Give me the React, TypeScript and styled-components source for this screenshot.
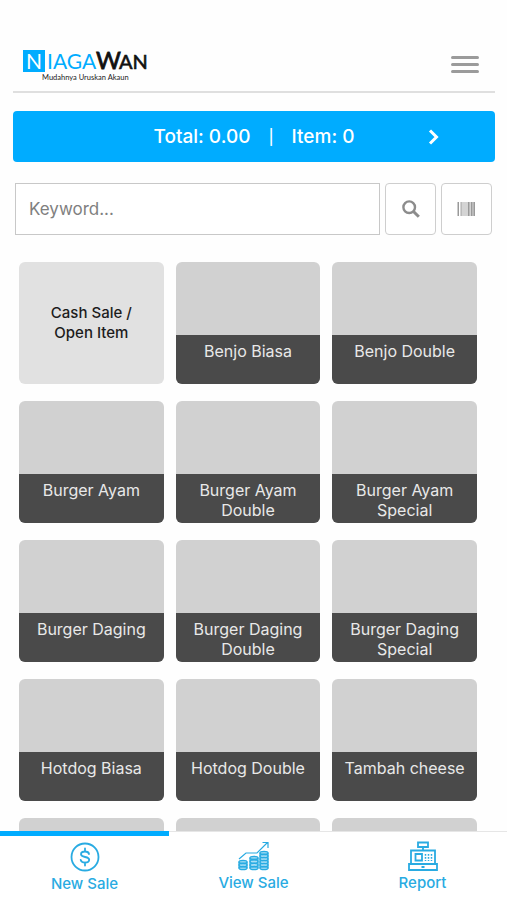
import React from "react";
import styled, { createGlobalStyle } from "styled-components";

const BLUE = "#00acff";
const NAV_BLUE = "#29abe2";

const GlobalStyle = createGlobalStyle`
  *, *::before, *::after { box-sizing: border-box; }
  body {
    margin: 0;
    background: #fefefe;
    font-family: Inter, "Liberation Sans", sans-serif;
  }
  button, input { font: inherit; }
`;

const Page = styled.div`
  display: flex;
  flex-direction: column;
  height: 100vh;
  overflow: hidden;
`;

const Header = styled.header`
  display: flex;
  align-items: center;
  justify-content: space-between;
  margin: 38px 12px 0 13px;
  padding: 0 16px 0 10px;
  height: 55px;
  flex: none;
  border-bottom: 2px solid #dfdfdf;
`;

const HomeLink = styled.a`
  display: flex;
`;

const MenuButton = styled.button`
  display: flex;
  flex-direction: column;
  gap: 4px;
  padding: 0;
  border: 0;
  background: none;
  cursor: pointer;
`;

const MenuBar = styled.span`
  width: 28px;
  height: 3px;
  border-radius: 2px;
  background: #9b9b9b;
`;

const TotalBar = styled.button`
  display: grid;
  grid-template-columns: 1fr auto 1fr;
  align-items: center;
  flex: none;
  height: 51px;
  margin: 18px 12px 0 13px;
  padding: 0;
  border: 0;
  border-radius: 4px;
  background: ${BLUE};
  color: #fff;
  font-size: 19px;
  font-weight: 500;
  cursor: pointer;
`;

const Totals = styled.span`
  display: flex;
  align-items: center;
  grid-column: 2;
  gap: 18px;
`;

const Divider = styled.span`
  font-size: 15px;
`;

const ChevronSlot = styled.span`
  display: flex;
  justify-content: flex-end;
  padding-right: 55px;
`;

const SearchRow = styled.form`
  display: flex;
  flex: none;
  gap: 5px;
  height: 52px;
  margin: 21px 15px 0;
`;

const SearchInput = styled.input`
  flex: 1;
  min-width: 0;
  padding: 0 13px;
  border: 1px solid #c8c8c8;
  background: #fff;
  color: #444;
  font-size: 17px;
  outline: none;

  &::placeholder { color: #808080; opacity: 1; }
  &:focus { border-color: ${BLUE}; }
`;

const IconButton = styled.button`
  display: flex;
  align-items: center;
  justify-content: center;
  width: 51px;
  padding: 0;
  border: 1px solid #cecece;
  border-radius: 4px;
  background: #fff;
  cursor: pointer;
`;

const Catalogue = styled.main`
  display: grid;
  grid-template-columns: repeat(3, 1fr);
  grid-auto-rows: 122px;
  gap: 17px 12px;
  flex: 1;
  min-height: 0;
  margin-top: 27px;
  padding: 0 30px 0 19px;
  overflow-y: auto;
  scrollbar-width: none;
`;

const Tile = styled.button<{ $open?: boolean }>`
  display: flex;
  flex-direction: column;
  justify-content: ${(p) => (p.$open ? "center" : "flex-end")};
  align-items: stretch;
  padding: 0;
  overflow: hidden;
  border: 0;
  border-radius: 6px;
  background: ${(p) => (p.$open ? "#e1e1e1" : "#d1d1d1")};
  color: ${(p) => (p.$open ? "#1c1c1c" : "#e8e8e8")};
  font-size: ${(p) => (p.$open ? "15px" : "16px")};
  font-weight: ${(p) => (p.$open ? 500 : 400)};
  line-height: 20px;
  cursor: pointer;
`;

const OpenLabel = styled.span`
  padding: 0 24px;
`;

const TileLabel = styled.span`
  height: 49px;
  padding: 6px 8px 0;
  background: #4a4a4a;
`;

const Nav = styled.nav`
  display: grid;
  grid-template-columns: repeat(3, 1fr);
  flex: none;
  height: 69px;
  background: #fff;
`;

const Tab = styled.a<{ $active?: boolean }>`
  display: flex;
  flex-direction: column;
  align-items: center;
  gap: 2px;
  padding-top: ${(p) => (p.$active ? "6px" : "9px")};
  border-top: ${(p) => (p.$active ? `5px solid ${BLUE}` : "1px solid #e6e6e6")};
  color: ${NAV_BLUE};
  font-size: 15px;
  font-weight: 500;
  line-height: 20px;
  text-decoration: none;
`;

const Logo = () => (
  <svg width="128" height="38" viewBox="0 0 128 38" role="img" aria-label="NiagaWan, Mudahnya Uruskan Akaun">
    <rect x="0" y="4" width="22" height="22" fill={BLUE} />
    <g fontFamily="Lato, sans-serif" fontSize="21">
      <text x="3" y="23" fill="#fff">N</text>
      <text x="24" y="23" fill={BLUE}>IAGA</text>
      <text x="73" y="23" fontSize="24" fill="#111" stroke="#111" strokeWidth="0.8">W</text>
      <text x="96" y="23" fontSize="20" fill="#111" stroke="#111" strokeWidth="0.6">AN</text>
    </g>
    <text x="19" y="34" fontFamily="Lato, sans-serif" fontSize="7.500" fill="#222">Mudahnya Uruskan Akaun</text>
  </svg>
);

const Chevron = () => (
  <svg width="12" height="16" viewBox="0 0 12 16" fill="none" stroke="#fff" strokeWidth="3" aria-hidden="true">
    <path d="M2 1.500 8.500 8 2 14.500" />
  </svg>
);

const SearchIcon = () => (
  <svg width="18" height="18" viewBox="0 0 18 18" fill="none" stroke="#8c8c8c" aria-hidden="true">
    <circle cx="7.200" cy="7.200" r="5.800" strokeWidth="2.400" />
    <path d="m11.500 11.500 5.300 5.300" strokeWidth="3" />
  </svg>
);

const BarcodeIcon = () => (
  <svg width="19" height="14" viewBox="0 0 19 14" aria-hidden="true">
    <path d="M3 0h14v14H3z" fill="#d4d4d4" />
    <path d="M.5 0H2v14H.5zM11 0h1v14h-1zM14 0h1v14h-1zM16.500 0H18v14h-1.500z" fill="#999" />
    <path d="M4 0h1v14H4zM12 0h1v14h-1zM15 0h1v14h-1z" fill="#bbb" />
  </svg>
);

const DollarIcon = () => (
  <svg width="30" height="30" viewBox="0 0 30 30" fill="none" stroke={NAV_BLUE} strokeWidth="1.800" strokeLinecap="round" aria-hidden="true">
    <circle cx="15" cy="15" r="13.500" />
    <path d="M15 6.500v3M15 20.500v3M19 12c-.3-1.700-1.800-2.500-4-2.500-2.400 0-4 1-4 2.700 0 4 8.200 1.600 8.200 5.600 0 1.800-1.700 2.800-4.200 2.800-2.400 0-4-1-4.300-2.700" />
  </svg>
);

const coinStacks = [
  { x: 1, rows: [21, 24, 27] },
  { x: 12, rows: [17, 20.5, 24, 27] },
  { x: 22, rows: [12, 15, 18, 21, 24, 27] },
];

const CoinsIcon = () => (
  <svg width="32" height="30" viewBox="0 0 32 30" fill="none" stroke={NAV_BLUE} strokeWidth="1.200" aria-hidden="true">
    <path d="M1 18 8 12h11L29.500 1.500M24.500 1.500h5.500v5.500" />
    {coinStacks.map(({ x, rows }) => (
      <g key={x}>
        <path d={`M${x} ${rows[0]}V27h8V${rows[0]}z`} fill="#a9def5" />
        {rows.map((y) => (
          <ellipse key={y} cx={x + 4} cy={y} rx="4" ry="1.700" />
        ))}
      </g>
    ))}
  </svg>
);

const RegisterIcon = () => (
  <svg width="30" height="30" viewBox="0 0 30 30" fill="none" stroke={NAV_BLUE} strokeWidth="1.800" aria-hidden="true">
    <path d="M10 1.500h10v4.500H10zM15 6v4M3 23V9.500h24V23M1 23h28v6H1zM7.500 13h6.500v6.500H7.500zM13.500 26h3" />
    <path d="M17.500 13v7M20.500 13v7M23.500 13v7" strokeDasharray="1.800 1.200" strokeWidth="1.500" />
  </svg>
);

const products = [
  "Benjo Biasa",
  "Benjo Double",
  "Burger Ayam",
  "Burger Ayam Double",
  "Burger Ayam Special",
  "Burger Daging",
  "Burger Daging Double",
  "Burger Daging Special",
  "Hotdog Biasa",
  "Hotdog Double",
  "Tambah cheese",
];

const emptySlots = ["slot-1", "slot-2", "slot-3"];

export default function App() {
  return (
    <Page>
      <GlobalStyle />
      <Header>
        <HomeLink href="#home">
          <Logo />
        </HomeLink>
        <MenuButton type="button" aria-label="Menu">
          <MenuBar />
          <MenuBar />
          <MenuBar />
        </MenuButton>
      </Header>

      <TotalBar type="button">
        <Totals>
          <span>Total: 0.00</span>
          <Divider>|</Divider>
          <span>Item: 0</span>
        </Totals>
        <ChevronSlot>
          <Chevron />
        </ChevronSlot>
      </TotalBar>

      <SearchRow onSubmit={(e) => e.preventDefault()}>
        <SearchInput type="text" placeholder="Keyword..." aria-label="Keyword" />
        <IconButton type="submit" aria-label="Search">
          <SearchIcon />
        </IconButton>
        <IconButton type="button" aria-label="Scan barcode">
          <BarcodeIcon />
        </IconButton>
      </SearchRow>

      <Catalogue>
        <Tile type="button" $open>
          <OpenLabel>Cash Sale / Open Item</OpenLabel>
        </Tile>
        {products.map((name) => (
          <Tile type="button" key={name}>
            <TileLabel>{name}</TileLabel>
          </Tile>
        ))}
        {emptySlots.map((slot) => (
          <Tile type="button" key={slot} aria-label="Item">
            <TileLabel />
          </Tile>
        ))}
      </Catalogue>

      <Nav>
        <Tab href="#new-sale" $active aria-current="page">
          <DollarIcon />
          New Sale
        </Tab>
        <Tab href="#view-sale">
          <CoinsIcon />
          View Sale
        </Tab>
        <Tab href="#report">
          <RegisterIcon />
          Report
        </Tab>
      </Nav>
    </Page>
  );
}
